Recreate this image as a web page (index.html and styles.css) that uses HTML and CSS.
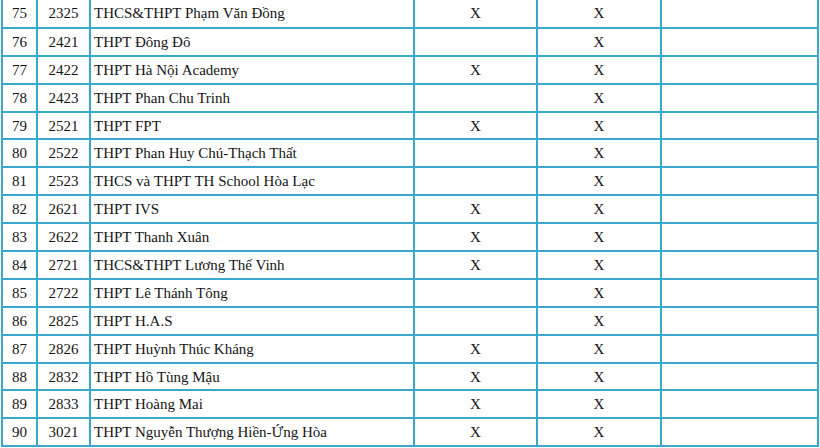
FILE: index.html
```html
<!DOCTYPE html>
<html lang="vi">
<head>
<meta charset="utf-8">
<link rel="stylesheet" href="styles.css">
</head>
<body>
<div class="wrap">
<table class="list">
<colgroup>
<col class="c-no"><col class="c-code"><col class="c-name"><col class="c-a"><col class="c-b"><col class="c-c">
</colgroup>
<tbody>
<tr><td class="ctr">75</td><td class="ctr">2325</td><td class="name">THCS&amp;THPT Phạm Văn Đồng</td><td class="ctr">X</td><td class="ctr">X</td><td></td></tr>
<tr><td class="ctr">76</td><td class="ctr">2421</td><td class="name">THPT Đông Đô</td><td class="ctr"></td><td class="ctr">X</td><td></td></tr>
<tr><td class="ctr">77</td><td class="ctr">2422</td><td class="name">THPT Hà Nội Academy</td><td class="ctr">X</td><td class="ctr">X</td><td></td></tr>
<tr><td class="ctr">78</td><td class="ctr">2423</td><td class="name">THPT Phan Chu Trinh</td><td class="ctr"></td><td class="ctr">X</td><td></td></tr>
<tr><td class="ctr">79</td><td class="ctr">2521</td><td class="name">THPT FPT</td><td class="ctr">X</td><td class="ctr">X</td><td></td></tr>
<tr><td class="ctr">80</td><td class="ctr">2522</td><td class="name">THPT Phan Huy Chú-Thạch Thất</td><td class="ctr"></td><td class="ctr">X</td><td></td></tr>
<tr><td class="ctr">81</td><td class="ctr">2523</td><td class="name">THCS và THPT TH School Hòa Lạc</td><td class="ctr"></td><td class="ctr">X</td><td></td></tr>
<tr><td class="ctr">82</td><td class="ctr">2621</td><td class="name">THPT IVS</td><td class="ctr">X</td><td class="ctr">X</td><td></td></tr>
<tr><td class="ctr">83</td><td class="ctr">2622</td><td class="name">THPT Thanh Xuân</td><td class="ctr">X</td><td class="ctr">X</td><td></td></tr>
<tr><td class="ctr">84</td><td class="ctr">2721</td><td class="name">THCS&amp;THPT Lương Thế Vinh</td><td class="ctr">X</td><td class="ctr">X</td><td></td></tr>
<tr><td class="ctr">85</td><td class="ctr">2722</td><td class="name">THPT Lê Thánh Tông</td><td class="ctr"></td><td class="ctr">X</td><td></td></tr>
<tr><td class="ctr">86</td><td class="ctr">2825</td><td class="name">THPT H.A.S</td><td class="ctr"></td><td class="ctr">X</td><td></td></tr>
<tr><td class="ctr">87</td><td class="ctr">2826</td><td class="name">THPT Huỳnh Thúc Kháng</td><td class="ctr">X</td><td class="ctr">X</td><td></td></tr>
<tr><td class="ctr">88</td><td class="ctr">2832</td><td class="name">THPT Hồ Tùng Mậu</td><td class="ctr">X</td><td class="ctr">X</td><td></td></tr>
<tr><td class="ctr">89</td><td class="ctr">2833</td><td class="name">THPT Hoàng Mai</td><td class="ctr">X</td><td class="ctr">X</td><td></td></tr>
<tr><td class="ctr">90</td><td class="ctr">3021</td><td class="name">THPT Nguyễn Thượng Hiền-Ứng Hòa</td><td class="ctr">X</td><td class="ctr">X</td><td></td></tr>
</tbody>
</table>
</div>
</body>
</html>
```
FILE: styles.css
```css
html, body {
  margin: 0;
  padding: 0;
  background: #ffffff;
}
body {
  font-family: "Liberation Serif", "Times New Roman", serif;
  font-size: 15px;
  color: #151515;
  overflow: hidden;
}
.wrap {
  padding-left: 1px;
}
.list {
  border-collapse: collapse;
  table-layout: fixed;
  width: 816px;
}
.c-no { width: 35px; }
.c-code { width: 53px; }
.c-name { width: 324px; }
.c-a { width: 123px; }
.c-b { width: 124px; }
.c-c { width: 157px; }
.list tr:first-child td {
  border-top: none;
}
.list td {
  border: 2px solid #3aa8cc;
  height: 27.9px;
  padding: 0 3px;
  box-sizing: border-box;
  line-height: 18px;
  vertical-align: middle;
  white-space: nowrap;
}
.list td.ctr { text-align: center; }
.list td.name { text-align: left; }
```
